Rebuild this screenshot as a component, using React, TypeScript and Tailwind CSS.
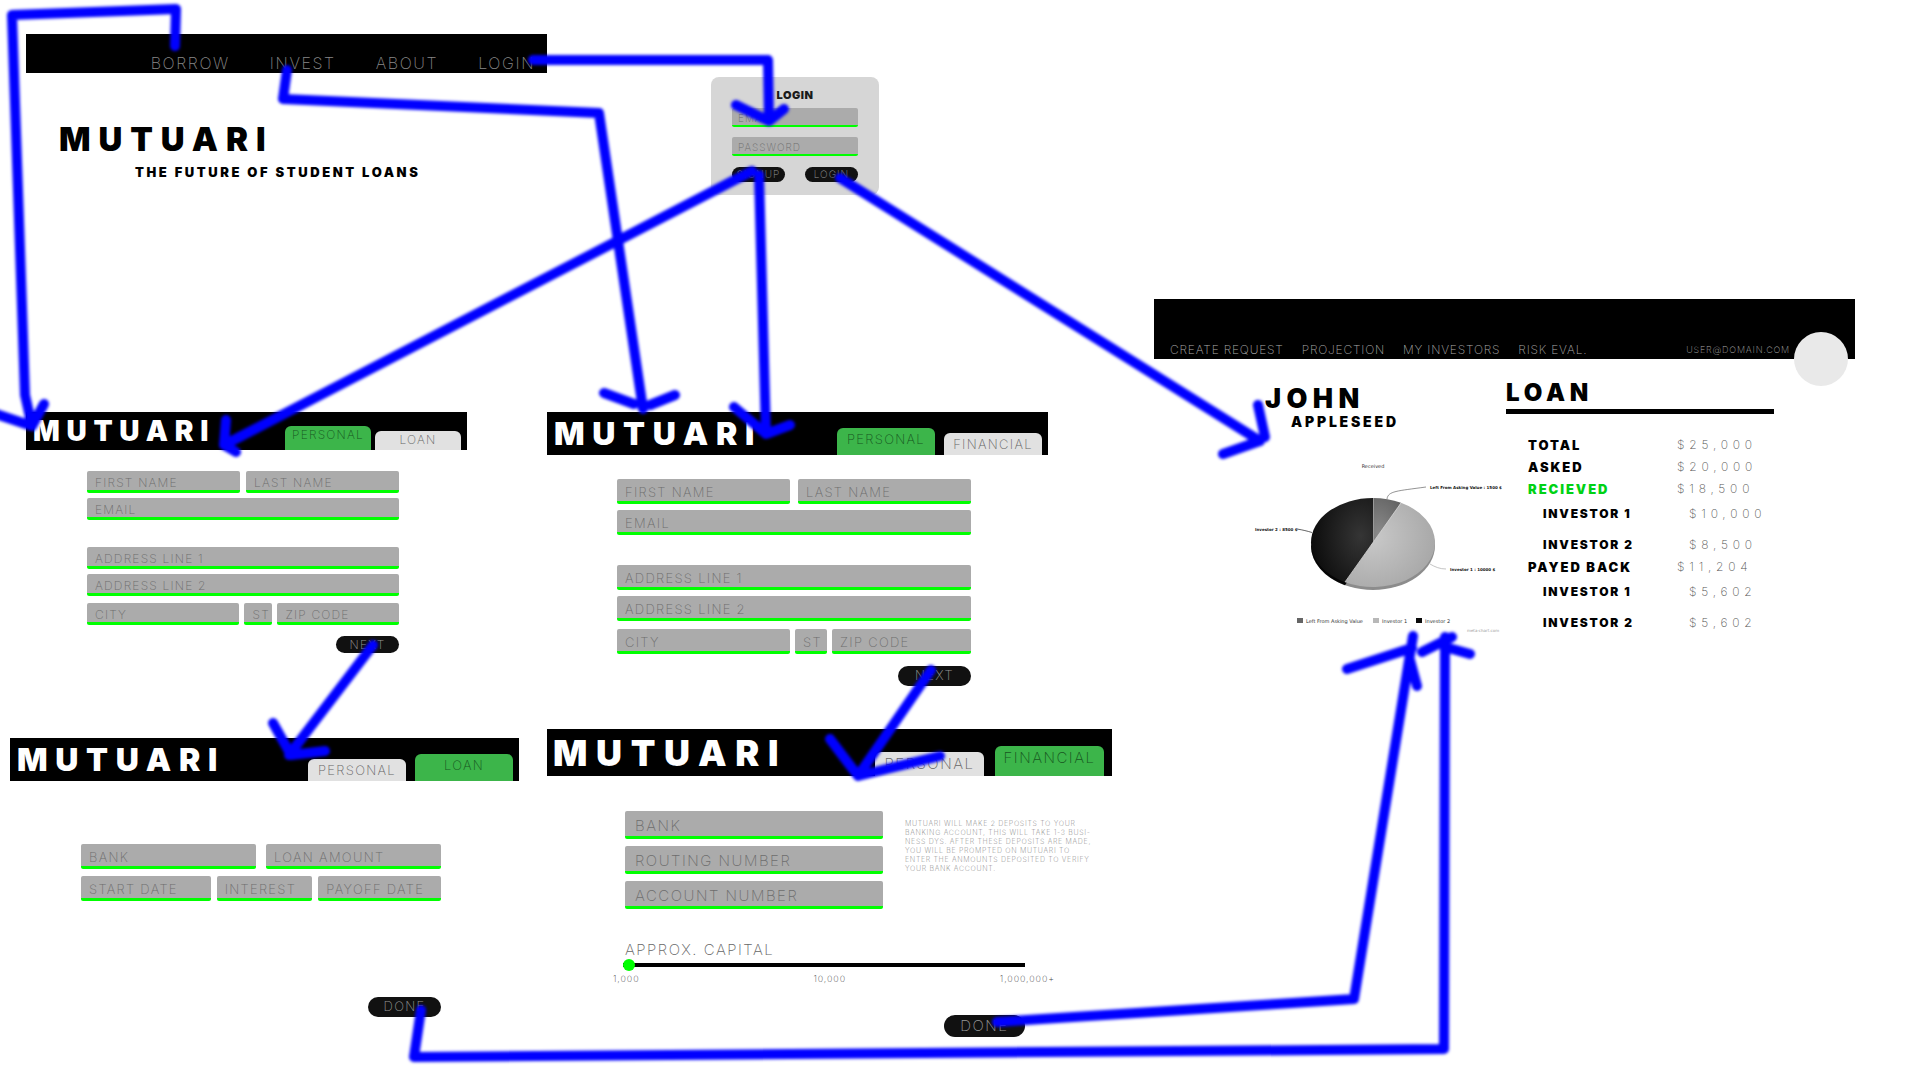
import React from "react";

type Size = "xs" | "sm" | "md" | "lg";

const thin = "font-['Inter',sans-serif] font-extralight tracking-widest";
const thinTight = "font-['Inter',sans-serif] font-extralight tracking-wider";
const black = "font-['Inter',sans-serif] font-black";

const fieldSize: Record<Size, string> = {
  xs: "h-[19px] border-b-2 pl-1.5 pt-0.5 text-[10px]",
  sm: "h-[22px] border-b-[3px] pl-2 pt-1 text-xs",
  md: "h-[25px] border-b-[3px] pl-2 pt-1 text-[13px]",
  lg: "h-7 border-b-[3px] pl-2.5 pt-1 text-[15px]",
};

const pillSize: Record<Size, string> = {
  xs: "h-[15px] w-[53px] text-[10px]",
  sm: "h-[17px] w-[63px] text-xs",
  md: "h-5 w-[73px] text-[13px]",
  lg: "h-[22px] w-[81px] text-[15px]",
};

const barSize: Record<Size, string> = {
  xs: "",
  sm: "h-[38px] pl-[7px] pr-1.5 text-[28px]",
  md: "h-[43px] pl-[7px] pr-1.5 text-[32px]",
  lg: "h-[47px] pl-1.5 pr-2 text-[36px]",
};

const tabSize: Record<Size, string> = {
  xs: "",
  sm: "w-[86px] text-xs leading-[18px]",
  md: "w-[98px] text-[13px] leading-[22px]",
  lg: "w-[109px] text-[15px] leading-6",
};

const tabGap: Record<Size, string> = { xs: "", sm: "gap-1", md: "gap-[9px]", lg: "gap-[11px]" };

const tabHeight: Record<Size, [string, string]> = {
  xs: ["", ""],
  sm: ["h-6", "h-[19px]"],
  md: ["h-[27px]", "h-[22px]"],
  lg: ["h-[30px]", "h-6"],
};

function Field({ label, size, type = "text" }: { label: string; size: Size; type?: string }) {
  return (
    <input
      type={type}
      aria-label={label}
      placeholder={label}
      className={`block w-full min-w-0 rounded-xs border-[#00ff00] bg-[#ababab] text-[#555] outline-none placeholder:text-[#6d6d6d] placeholder:opacity-100 ${thin} ${fieldSize[size]}`}
    />
  );
}

function Pill({ children, size }: { children: string; size: Size }) {
  return (
    <button
      type="button"
      className={`flex items-center justify-center rounded-full bg-[#111] text-[#999] ${thin} ${pillSize[size]}`}
    >
      {children}
    </button>
  );
}

function TabBar({ size, tabs, active }: { size: Size; tabs: string[]; active: number }) {
  return (
    <header className={`flex items-center justify-between bg-black text-white ${barSize[size]}`}>
      <h2 className={`leading-none tracking-[0.24em] ${black}`}>MUTUARI</h2>
      <div role="tablist" className={`flex items-end self-end ${tabGap[size]}`}>
        {tabs.map((tab, i) => (
          <button
            key={tab}
            type="button"
            role="tab"
            aria-selected={i === active}
            className={`flex items-start justify-center rounded-t-md ${thin} ${tabSize[size]} ${
              i === active
                ? `bg-[#3cb54a] text-[#17551f] ${tabHeight[size][0]}`
                : `bg-[#e1e1e1] text-[#666] ${tabHeight[size][1]}`
            }`}
          >
            {tab}
          </button>
        ))}
      </div>
    </header>
  );
}

function Landing() {
  return (
    <section className="absolute left-[26px] top-[34px] w-[521px]">
      <nav
        className={`flex h-[39px] items-end justify-end gap-10 bg-black pr-3 text-base leading-[19px] text-[#888] ${thin}`}
      >
        <a href="#borrow">BORROW</a>
        <a href="#invest">INVEST</a>
        <a href="#about">ABOUT</a>
        <a href="#login">LOGIN</a>
      </nav>
      <h1 className={`mt-[50px] pl-[33px] text-[33px] leading-8 tracking-[0.24em] ${black}`}>MUTUARI</h1>
      <p className={`mt-2 pl-[109px] text-[13px] leading-[18px] tracking-[0.2em] ${black}`}>
        THE FUTURE OF STUDENT LOANS
      </p>
    </section>
  );
}

function Login() {
  return (
    <form className="absolute left-[711px] top-[77px] w-[168px] rounded-lg bg-[#d6d6d6] px-[21px] pb-[13px] pt-2.5">
      <h2 className={`text-center text-[11px] leading-4 tracking-wider text-[#1b1b1b] ${black}`}>LOGIN</h2>
      <div className="mt-[5px] flex flex-col gap-2.5">
        <Field size="xs" label="EMAIL" type="email" />
        <Field size="xs" label="PASSWORD" type="password" />
      </div>
      <div className="mt-[11px] flex justify-between">
        <Pill size="xs">SIGNUP</Pill>
        <Pill size="xs">LOGIN</Pill>
      </div>
    </form>
  );
}

function BorrowPersonal() {
  return (
    <section className="absolute left-[26px] top-[412px] w-[441px]">
      <TabBar size="sm" tabs={["PERSONAL", "LOAN"]} active={0} />
      <form className="mt-[21px] flex flex-col gap-[5px] pl-[61px] pr-[68px]">
        <div className="grid grid-cols-2 gap-1.5">
          <Field size="sm" label="FIRST NAME" />
          <Field size="sm" label="LAST NAME" />
        </div>
        <Field size="sm" label="EMAIL" type="email" />
        <div className="mt-[22px]">
          <Field size="sm" label="ADDRESS LINE 1" />
        </div>
        <Field size="sm" label="ADDRESS LINE 2" />
        <div className="mt-0.5 grid grid-cols-[153fr_28fr_122fr] gap-[5px]">
          <Field size="sm" label="CITY" />
          <Field size="sm" label="ST" />
          <Field size="sm" label="ZIP CODE" />
        </div>
        <div className="mt-1.5 flex justify-end">
          <Pill size="sm">NEXT</Pill>
        </div>
      </form>
    </section>
  );
}

function InvestPersonal() {
  return (
    <section className="absolute left-[547px] top-[412px] w-[501px]">
      <TabBar size="md" tabs={["PERSONAL", "FINANCIAL"]} active={0} />
      <form className="mt-6 flex flex-col gap-1.5 pl-[70px] pr-[77px]">
        <div className="grid grid-cols-2 gap-2">
          <Field size="md" label="FIRST NAME" />
          <Field size="md" label="LAST NAME" />
        </div>
        <Field size="md" label="EMAIL" type="email" />
        <div className="mt-6">
          <Field size="md" label="ADDRESS LINE 1" />
        </div>
        <Field size="md" label="ADDRESS LINE 2" />
        <div className="mt-0.5 grid grid-cols-[173fr_32fr_139fr] gap-[5px]">
          <Field size="md" label="CITY" />
          <Field size="md" label="ST" />
          <Field size="md" label="ZIP CODE" />
        </div>
        <div className="mt-1.5 flex justify-end">
          <Pill size="md">NEXT</Pill>
        </div>
      </form>
    </section>
  );
}

function BorrowLoan() {
  return (
    <section className="absolute left-[10px] top-[738px] w-[509px]">
      <TabBar size="md" tabs={["PERSONAL", "LOAN"]} active={1} />
      <form className="mt-[63px] flex flex-col gap-[7px] pl-[71px] pr-[78px]">
        <div className="grid grid-cols-2 gap-2.5">
          <Field size="md" label="BANK" />
          <Field size="md" label="LOAN AMOUNT" />
        </div>
        <div className="grid grid-cols-[130fr_96fr_123fr] gap-1.5">
          <Field size="md" label="START DATE" />
          <Field size="md" label="INTEREST" />
          <Field size="md" label="PAYOFF DATE" />
        </div>
        <div className="mt-[89px] flex justify-end">
          <Pill size="md">DONE</Pill>
        </div>
      </form>
    </section>
  );
}

function InvestFinancial() {
  return (
    <section className="absolute left-[547px] top-[729px] w-[565px]">
      <TabBar size="lg" tabs={["PERSONAL", "FINANCIAL"]} active={1} />
      <form className="mt-[35px] pl-[78px]">
        <div className="flex gap-[22px]">
          <div className="flex w-[258px] flex-col gap-[7px]">
            <Field size="lg" label="BANK" />
            <Field size="lg" label="ROUTING NUMBER" />
            <Field size="lg" label="ACCOUNT NUMBER" />
          </div>
          <p className={`pt-2 text-[7px] leading-[9px] text-[#777] ${thin}`}>
            MUTUARI WILL MAKE 2 DEPOSITS TO YOUR
            <br />
            BANKING ACCOUNT, THIS WILL TAKE 1-3 BUSI-
            <br />
            NESS DYS. AFTER THESE DEPOSITS ARE MADE,
            <br />
            YOU WILL BE PROMPTED ON MUTUARI TO
            <br />
            ENTER THE ANMOUNTS DEPOSITED TO VERIFY
            <br />
            YOUR BANK ACCOUNT.
          </p>
        </div>
        <label htmlFor="capital" className={`mt-8 block text-[15px] leading-[18px] text-[#666] ${thin}`}>
          APPROX. CAPITAL
        </label>
        <input
          id="capital"
          type="range"
          min={0}
          max={100}
          defaultValue={0}
          className="-ml-0.5 block h-3 w-[402px] appearance-none bg-transparent [&::-webkit-slider-runnable-track]:h-1 [&::-webkit-slider-runnable-track]:bg-black [&::-webkit-slider-thumb]:-mt-1 [&::-webkit-slider-thumb]:size-3 [&::-webkit-slider-thumb]:appearance-none [&::-webkit-slider-thumb]:rounded-full [&::-webkit-slider-thumb]:bg-[#00ff00]"
        />
        <div className={`-ml-3 mt-0.5 flex w-[442px] justify-between text-[9px] leading-3 text-[#444] ${thin}`}>
          <span>1,000</span>
          <span className="pl-5">10,000</span>
          <span>1,000,000+</span>
        </div>
        <div className="mt-[30px] flex w-[400px] justify-end">
          <Pill size="lg">DONE</Pill>
        </div>
      </form>
    </section>
  );
}

function PieChart() {
  return (
    <svg
      viewBox="0 0 260 180"
      className="ml-[91px] mt-[22px] block h-[180px] w-[260px] font-['DejaVu_Sans',sans-serif]"
      role="img"
      aria-label="Received"
    >
      <defs>
        <radialGradient id="dark" cx="0.8" cy="0.45" r="0.8">
          <stop offset="0" stopColor="#353535" />
          <stop offset="1" stopColor="#0c0c0c" />
        </radialGradient>
        <radialGradient id="light" cx="0.3" cy="0.4" r="0.8">
          <stop offset="0" stopColor="#c9c9c9" />
          <stop offset="1" stopColor="#a4a4a4" />
        </radialGradient>
        <radialGradient id="mid" cx="0.2" cy="0.8" r="1">
          <stop offset="0" stopColor="#8a8a8a" />
          <stop offset="1" stopColor="#626262" />
        </radialGradient>
      </defs>
      <text x="128" y="13" fontSize="5" textAnchor="middle" fill="#333">Received</text>
      <ellipse cx="128" cy="90.500" rx="62" ry="44.500" fill="#8c8c8c" />
      <path d="M128 90.500L66 90.500A62 44.500 0 0 0 100 130.200z" fill="#050505" />
      <path d="M128 87.500V43A62 44.500 0 0 0 66 87.500A62 44.500 0 0 0 100 127.200z" fill="url(#dark)" />
      <path d="M128 87.500L156 47.800A62 44.500 0 0 1 190 87.500A62 44.500 0 0 1 100 127.200z" fill="url(#light)" />
      <path d="M128 87.500V43A62 44.500 0 0 1 156 47.800z" fill="url(#mid)" />
      <path d="M128.500 86V43" stroke="#9a9a9a" strokeWidth="1" />
      <path d="M156 48L100 127" stroke="#d8d8d8" strokeWidth="0.800" />
      <g fill="none" strokeWidth="0.700">
        <path d="M142 44C143 36 152 36 181 32" stroke="#666" />
        <path d="M52 74C58 75 62 76 67 77.500" stroke="#222" />
        <path d="M185 109C190 112 195 114 201 114" stroke="#aaa" />
      </g>
      <g fontSize="4" fontWeight="700" fill="#111">
        <text x="185" y="34">Left From Asking Value : 1500 $</text>
        <text x="10" y="76">Investor 2 : 8500 $</text>
        <text x="205" y="116">Investor 1 : 10000 $</text>
      </g>
      <g fontSize="5" fill="#333">
        <rect x="52" y="163" width="6" height="5" fill="#666" />
        <text x="61" y="168">Left From Asking Value</text>
        <rect x="128" y="163" width="6" height="5" fill="#b8b8b8" />
        <text x="137" y="168">Investor 1</text>
        <rect x="171" y="163" width="6" height="5" fill="#0a0a0a" />
        <text x="180" y="168">Investor 2</text>
      </g>
      <text x="222" y="177" fontSize="4" fill="#999">meta-chart.com</text>
    </svg>
  );
}

const loanRows = [
  { label: "TOTAL", value: "$25,000", kind: "main" },
  { label: "ASKED", value: "$20,000", kind: "main" },
  { label: "RECIEVED", value: "$18,500", kind: "green" },
  { label: "INVESTOR 1", value: "$10,000", kind: "first" },
  { label: "INVESTOR 2", value: "$8,500", kind: "last" },
  { label: "PAYED BACK", value: "$11,204", kind: "main" },
  { label: "INVESTOR 1", value: "$5,602", kind: "first" },
  { label: "INVESTOR 2", value: "$5,602", kind: "last" },
];

const labelCell: Record<string, string> = {
  main: "h-[22px] text-[13px]",
  green: "h-[22px] text-[13px] text-[#00d214]",
  first: "h-7 pl-[15px] text-xs",
  last: "h-7 pl-[15px] pt-1.5 text-xs",
};

const valueCell: Record<string, string> = {
  main: "",
  green: "",
  first: "pl-3",
  last: "pl-3 pt-1.5",
};

function Dashboard() {
  return (
    <section className="absolute left-[1154px] top-[299px] w-[701px]">
      <header className={`flex h-[60px] items-end bg-black pl-4 pr-[7px] text-[#aaa] ${thinTight}`}>
        <nav className="flex gap-[18px] pb-px text-xs leading-4">
          <a href="#create">CREATE REQUEST</a>
          <a href="#projection">PROJECTION</a>
          <a href="#investors">MY INVESTORS</a>
          <a href="#risk">RISK EVAL.</a>
        </nav>
        <span className="ml-auto pb-px text-[9px] leading-4">USER@DOMAIN.COM</span>
        <span className="-mb-[27px] ml-1 size-[54px] rounded-full bg-[#e9e9e9]" />
      </header>
      <div className="flex">
        <div className="w-[352px]">
          <h2 className={`mt-[26px] pl-[111px] text-[27px] leading-7 tracking-[0.2em] ${black}`}>JOHN</h2>
          <p className={`pl-[137px] text-sm leading-[18px] tracking-[0.2em] ${black}`}>APPLESEED</p>
          <div className="pt-0.5">
            <PieChart />
          </div>
        </div>
        <div className="w-[268px]">
          <h2 className={`mt-[21px] border-b-[5px] border-black pb-[3px] text-2xl leading-[26px] tracking-[0.2em] ${black}`}>
            LOAN
          </h2>
          <table className="ml-[22px] mt-5 border-collapse">
            <tbody>
              {loanRows.map((row, i) => (
                <tr key={i}>
                  <th
                    scope="row"
                    className={`w-[149px] whitespace-nowrap p-0 text-left leading-none tracking-[0.15em] ${black} ${labelCell[row.kind]}`}
                  >
                    {row.label}
                  </th>
                  <td
                    className={`whitespace-nowrap p-0 text-xs leading-none text-[#555] font-['Inter',sans-serif] font-extralight tracking-[0.4em] ${valueCell[row.kind]}`}
                  >
                    {row.value}
                  </td>
                </tr>
              ))}
            </tbody>
          </table>
        </div>
      </div>
    </section>
  );
}

const arrows = [
  "M175 46L176 9L12 15L25 395L32 426M-4 414L32 426L44 404",
  "M533 60H768L769 121M736 105L769 121L784 109",
  "M287 70L283 99L599 113L643 409M604 393L634 404M650 405L675 395",
  "M752 171L224 445M226 420L224 445L236 452",
  "M759 175L766 434M734 407L766 434L790 425",
  "M840 178L1260 441M1258 405L1265 437M1260 441L1223 454",
  "M373 645L289 755M273 723L291 755L325 751",
  "M931 670L858 776M830 739L858 776L940 756",
  "M421 1010L414 1057L1444 1049L1445 637M1422 652L1452 637M1445 647L1470 654",
  "M997 1022L1354 999L1413 636M1347 669L1412 648M1410 660L1417 686",
];

function Arrows() {
  return (
    <svg
      className="pointer-events-none absolute left-0 top-0 h-[1080px] w-[1920px]"
      viewBox="0 0 1920 1080"
      fill="none"
      stroke="#0000ff"
      strokeWidth="10"
      strokeLinecap="round"
      strokeLinejoin="round"
      aria-hidden="true"
    >
      <defs>
        <filter
          id="soft"
          filterUnits="userSpaceOnUse"
          x="-20"
          y="-20"
          width="1960"
          height="1120"
          colorInterpolationFilters="sRGB"
        >
          <feGaussianBlur stdDeviation="1.500" />
        </filter>
      </defs>
      <g filter="url(#soft)">
        {arrows.map((d) => (
          <path key={d} d={d} />
        ))}
      </g>
    </svg>
  );
}

export default function App() {
  return (
    <main className="relative min-h-screen overflow-hidden bg-white text-black">
      <Landing />
      <Login />
      <BorrowPersonal />
      <InvestPersonal />
      <BorrowLoan />
      <InvestFinancial />
      <Dashboard />
      <Arrows />
    </main>
  );
}
